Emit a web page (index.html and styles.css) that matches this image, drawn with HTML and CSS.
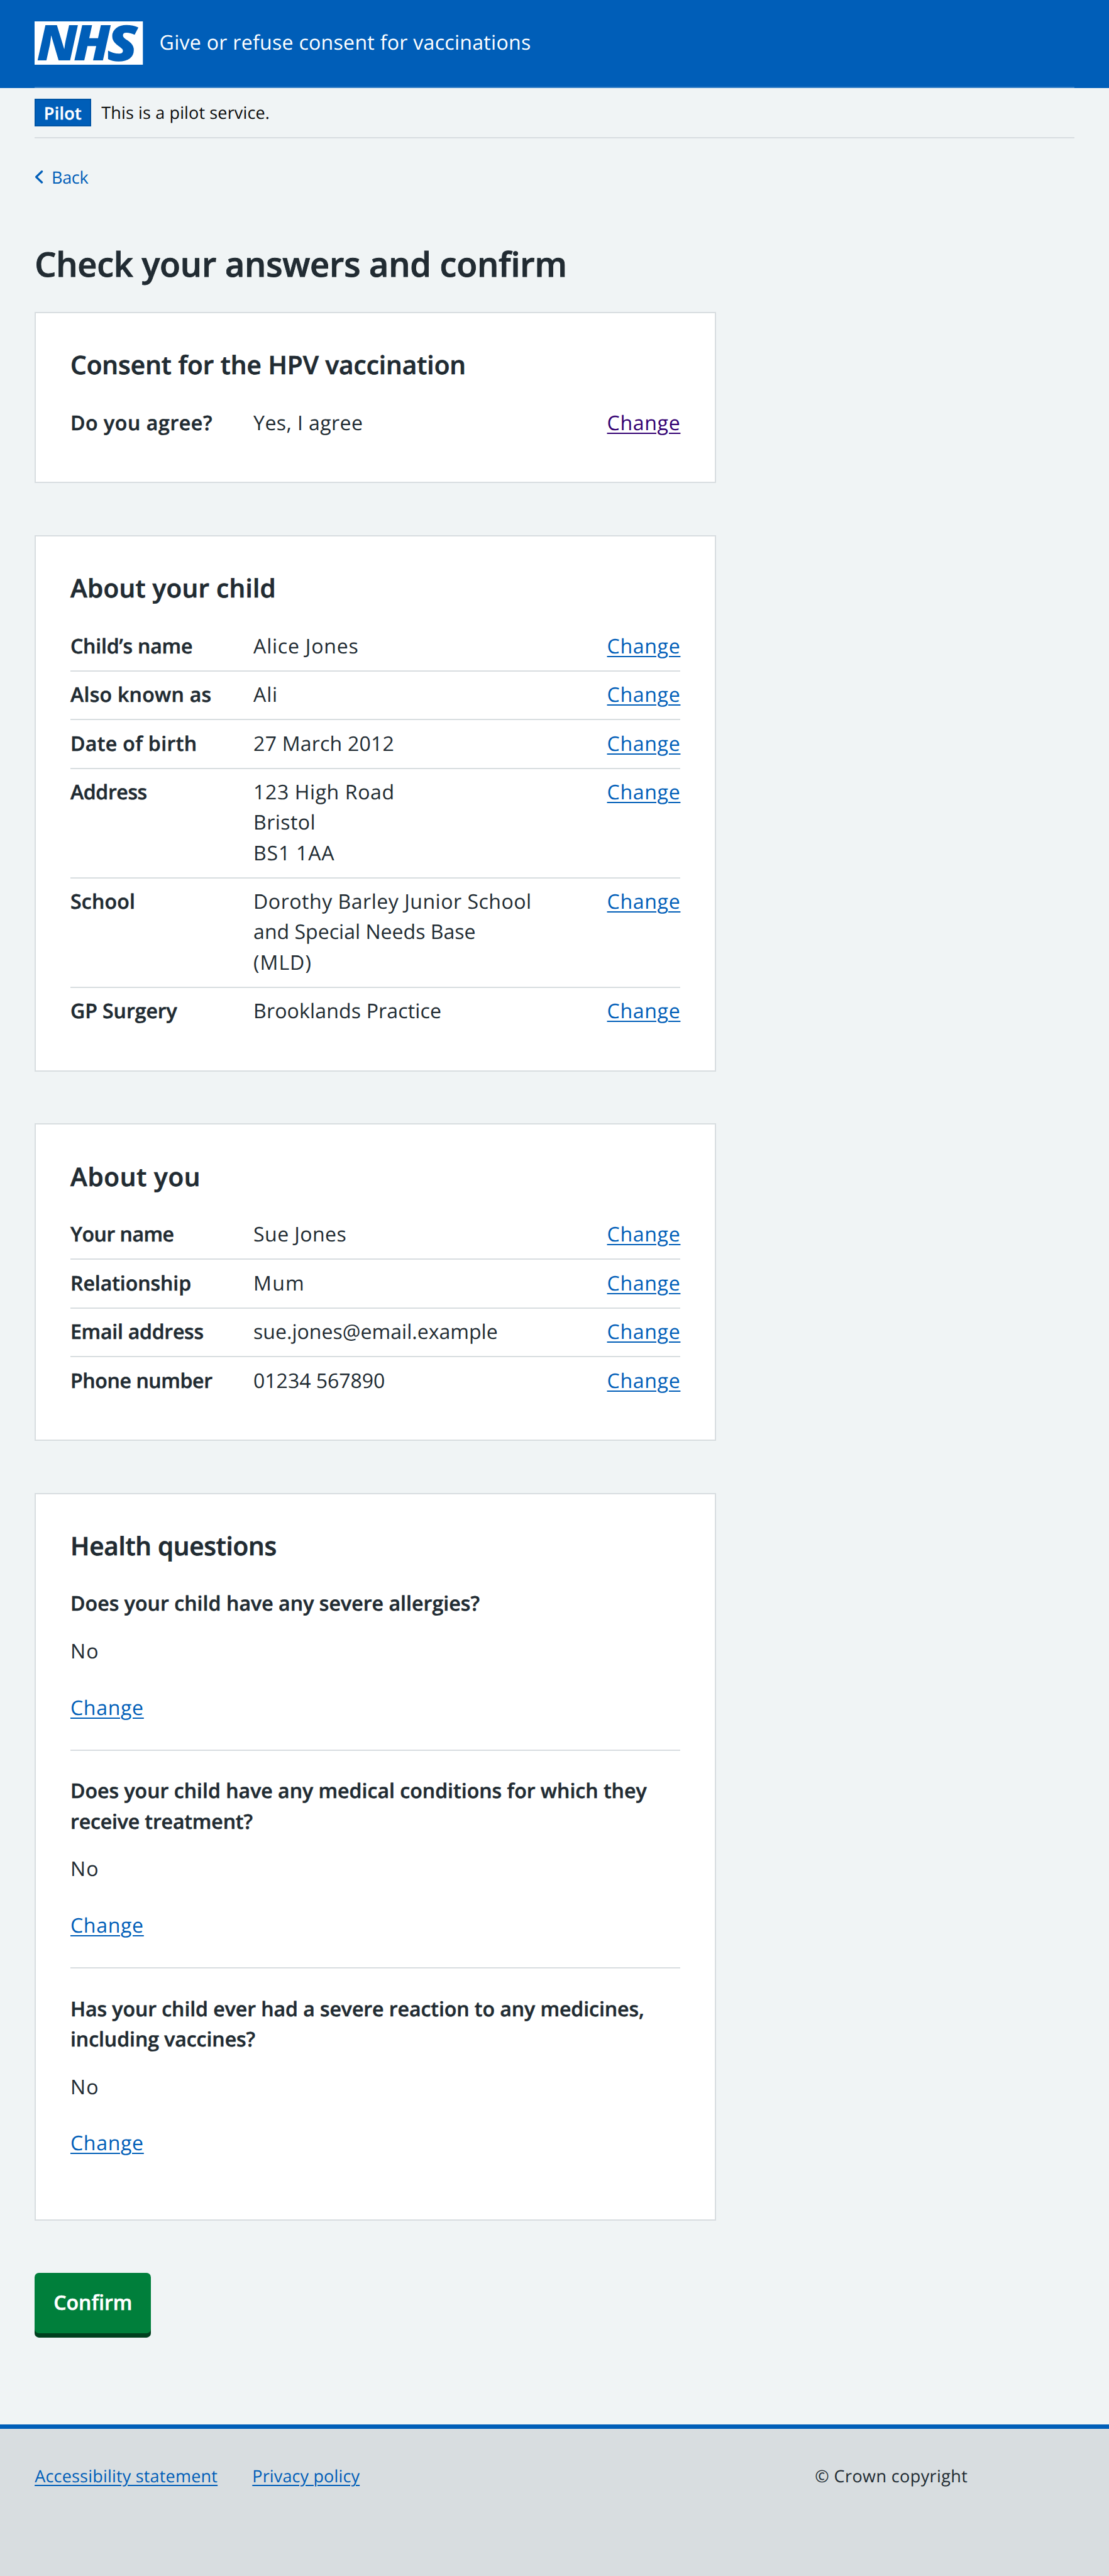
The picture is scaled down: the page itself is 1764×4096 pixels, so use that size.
FILE: index.html
```html
<!DOCTYPE html>
<html lang="en">
<head>
<meta charset="utf-8">
<title>Check your answers and confirm</title>
<link rel="stylesheet" href="styles.css">
</head>
<body>
<header class="header">
  <div class="header-inner">
    <svg class="logo" viewBox="0 0 200 80" role="img" aria-label="NHS">
      <rect width="200" height="80" fill="#fff"/>
      <g class="logo-text">
        <text transform="translate(4.2 72.3) scale(1.05 1)">N</text>
        <text transform="translate(72.1 72.3) scale(1.05 1)">H</text>
        <text transform="translate(133.6 72.6) scale(1.145 1.01)">S</text>
      </g>
    </svg>
    <span class="service-name">Give or refuse consent for vaccinations</span>
  </div>
</header>
<div class="container">
  <div class="phase-banner">
    <strong class="tag">Pilot</strong>
    <span class="phase-text">This is a pilot service.</span>
  </div>
  <a class="back-link" href="#"><svg class="chevron" viewBox="0 0 8 12"><path d="M6.7 1 1.5 6l5.2 5"/></svg><span class="ls-n30">Back</span></a>
  <main class="main">
    <h1 class="title">Check your answers and confirm</h1>

    <section class="card">
      <h2 class="card-title ls-0">Consent for the HPV vaccination</h2>
      <dl class="summary">
        <div class="row"><dt class="key ls-p55">Do you agree?</dt><dd class="value ls-p40">Yes, I agree</dd><dd class="action"><a class="link visited" href="#">Change</a></dd></div>
      </dl>
    </section>

    <section class="card">
      <h2 class="card-title ls-p25">About your child</h2>
      <dl class="summary">
        <div class="row"><dt class="key ls-n20">Child’s name</dt><dd class="value ls-p75">Alice Jones</dd><dd class="action"><a class="link" href="#">Change</a></dd></div>
        <div class="row"><dt class="key ls-p25">Also known as</dt><dd class="value ls-p75">Ali</dd><dd class="action"><a class="link" href="#">Change</a></dd></div>
        <div class="row"><dt class="key ls-p30">Date of birth</dt><dd class="value ls-p20">27 March 2012</dd><dd class="action"><a class="link" href="#">Change</a></dd></div>
        <div class="row"><dt class="key ls-n40">Address</dt><dd class="value"><span class="ls-p55">123 High Road</span><br><span class="ls-p40">Bristol</span><br><span class="ls-p75">BS1 1AA</span></dd><dd class="action"><a class="link" href="#">Change</a></dd></div>
        <div class="row"><dt class="key ls-p20">School</dt><dd class="value"><span class="ls-p50">Dorothy Barley Junior School</span><br><span class="ls-0">and Special Needs Base</span><br><span class="ls-p100">(MLD)</span></dd><dd class="action"><a class="link" href="#">Change</a></dd></div>
        <div class="row"><dt class="key ls-n05">GP Surgery</dt><dd class="value ls-p15">Brooklands Practice</dd><dd class="action"><a class="link" href="#">Change</a></dd></div>
      </dl>
    </section>

    <section class="card">
      <h2 class="card-title ls-p70">About you</h2>
      <dl class="summary">
        <div class="row"><dt class="key ls-n50">Your name</dt><dd class="value ls-p40">Sue Jones</dd><dd class="action"><a class="link" href="#">Change</a></dd></div>
        <div class="row"><dt class="key ls-n05">Relationship</dt><dd class="value ls-p120">Mum</dd><dd class="action"><a class="link" href="#">Change</a></dd></div>
        <div class="row"><dt class="key ls-n25">Email address</dt><dd class="value ls-0">sue.jones@email.example</dd><dd class="action"><a class="link" href="#">Change</a></dd></div>
        <div class="row"><dt class="key ls-n40">Phone number</dt><dd class="value ls-n05">01234 567890</dd><dd class="action"><a class="link" href="#">Change</a></dd></div>
      </dl>
    </section>

    <section class="card">
      <h2 class="card-title ls-n25">Health questions</h2>
      <dl class="questions">
        <div class="question"><dt class="ask ls-p05">Does your child have any severe allergies?</dt><dd class="answer">No</dd><dd class="change"><a class="link" href="#">Change</a></dd></div>
        <div class="question"><dt class="ask"><span class="ls-0">Does your child have any medical conditions for which they</span><br><span class="ls-n15">receive treatment?</span></dt><dd class="answer">No</dd><dd class="change"><a class="link" href="#">Change</a></dd></div>
        <div class="question"><dt class="ask ls-n05">Has your child ever had a severe reaction to any medicines,<br>including vaccines?</dt><dd class="answer">No</dd><dd class="change"><a class="link" href="#">Change</a></dd></div>
      </dl>
    </section>

    <button class="button" type="button">Confirm</button>
  </main>
</div>
<footer class="footer">
  <div class="footer-inner">
    <nav class="footer-links">
      <a class="link-small ls-p20" href="#">Accessibility statement</a>
      <a class="link-small ls-p15" href="#">Privacy policy</a>
    </nav>
    <span class="copyright ls-p40">© Crown copyright</span>
  </div>
</footer>
</body>
</html>
```
FILE: styles.css
```css
/* 1rem is ten layout units. */
html { font-size: 17.2266px; }
*, *::before, *::after { box-sizing: border-box; }
body {
  margin: 0;
  min-height: 4096px;
  display: flex;
  flex-direction: column;
  background: #f0f4f5;
  color: #212b32;
  font-family: "Open Sans", "Noto Sans", sans-serif;
  font-size: 1.862rem;
  line-height: 2.8rem;
  text-rendering: geometricPrecision;
}
h1, h2, dl, dd { margin: 0; }

.header { background: #005eb8; padding: 0 3.2rem; }
.header-inner {
  display: flex;
  align-items: center;
  gap: 1.52rem;
  height: 8.1rem;
  border-bottom: 2px solid #337ec6;
}
.logo { display: block; width: 10rem; height: 4rem; overflow: visible; }
.logo-text { font: italic 800 91px "Open Sans", sans-serif; fill: #005eb8; }
.service-name { color: #fff; letter-spacing: .28px; padding-bottom: .08rem; }

.container { padding: 0 3.2rem; }
.phase-banner {
  display: flex;
  align-items: center;
  gap: .96rem;
  height: 4.7rem;
  border-bottom: 2px solid #d8dde0;
  font-size: 1.568rem;
  line-height: 2.4rem;
  color: #0b0c0c;
}
.tag {
  width: 5.2rem;
  height: 2.6rem;
  border: 2px solid #0054a4;
  background: #005eb8;
  color: #fff;
  font-weight: 600;
  line-height: 2.4rem;
  text-align: center;
  letter-spacing: .3px;
}
.phase-text { letter-spacing: .14px; padding-bottom: .08rem; }

.back-link {
  display: flex;
  align-items: center;
  gap: .76rem;
  margin-top: 2.33rem;
  font-size: 1.568rem;
  line-height: 2.4rem;
  color: #005eb8;
  text-decoration: none;
}
.chevron { width: .8rem; height: 1.2rem; }
.chevron path { fill: none; stroke: #005eb8; stroke-width: 1.9; stroke-linecap: round; stroke-linejoin: round; }

.main { width: 62.933rem; padding-bottom: 8.4rem; }
.title {
  margin: 4.8rem 0 2.47rem;
  font-size: 3.136rem;
  line-height: 4rem;
  font-weight: 600;
  letter-spacing: -.2px;
  -webkit-text-stroke: .9px;
}
.card {
  margin-bottom: 4.8rem;
  padding: calc(3.267rem - 2px) calc(3.3rem - 2px) calc(3.3rem - 2px);
  border: 2px solid #d8dde0;
  background: #fff;
}
.card-title {
  margin-bottom: 1.633rem;
  font-size: 2.352rem;
  line-height: 3.2rem;
  font-weight: 600;
  -webkit-text-stroke: .7px;
}
.row {
  display: grid;
  grid-template-columns: 16.9rem 1fr auto;
  padding: .768rem 0 .832rem;
}
.row + .row, .question + .question { border-top: 2px solid #d8dde0; margin-top: -.28px; }
.key, .ask { font-weight: 600; -webkit-text-stroke: .5px; }
.tag { -webkit-text-stroke: .4px; }
.link { color: #005eb8; letter-spacing: .68px; }
.link, .link-small {
  text-decoration: underline;
  text-decoration-thickness: 2px;
  text-underline-offset: 3.5px;
}
.link.visited { color: #330072; }

.question { display: grid; padding: 2.368rem 0 2.432rem; }
.question:first-child { padding-top: .768rem; }
.answer { margin-top: 1.6rem; letter-spacing: 1.2px; }
.change { margin-top: 2.4rem; }

.button {
  display: block;
  width: 10.76rem;
  height: 5.6rem;
  padding: 0 0 .08rem;
  border: 0;
  border-radius: .4rem;
  background: #007f3b;
  box-shadow: 0 .4rem 0 #00401e;
  color: #fff;
  font: 600 1.862rem/2.8rem "Open Sans", "Noto Sans", sans-serif;
  letter-spacing: 0;
  -webkit-text-stroke: .5px;
}

.footer { flex: 1; border-top: 7px solid #005eb8; background: #d8dde0; padding: 3.14rem 3.2rem 0; }
.footer-inner { display: grid; grid-template-columns: 72.05rem auto; justify-content: start; font-size: 1.568rem; line-height: 2.4rem; }
.footer-links { display: flex; gap: 3.2rem; }
.link-small { color: #005eb8; }
.copyright { color: #212b32; }

/* Letter-spacing steps */
.ls-n50 { letter-spacing: -.5px; }
.ls-n40 { letter-spacing: -.4px; }
.ls-n30 { letter-spacing: -.3px; }
.ls-n25 { letter-spacing: -.27px; }
.ls-n20 { letter-spacing: -.2px; }
.ls-n15 { letter-spacing: -.15px; }
.ls-n05 { letter-spacing: -.07px; }
.ls-0 { letter-spacing: 0; }
.ls-p05 { letter-spacing: .05px; }
.ls-p15 { letter-spacing: .14px; }
.ls-p20 { letter-spacing: .2px; }
.ls-p25 { letter-spacing: .27px; }
.ls-p30 { letter-spacing: .35px; }
.ls-p40 { letter-spacing: .4px; }
.ls-p50 { letter-spacing: .5px; }
.ls-p55 { letter-spacing: .58px; }
.ls-p70 { letter-spacing: .68px; }
.ls-p75 { letter-spacing: .76px; }
.ls-p100 { letter-spacing: 1px; }
.ls-p120 { letter-spacing: 1.2px; }
```
